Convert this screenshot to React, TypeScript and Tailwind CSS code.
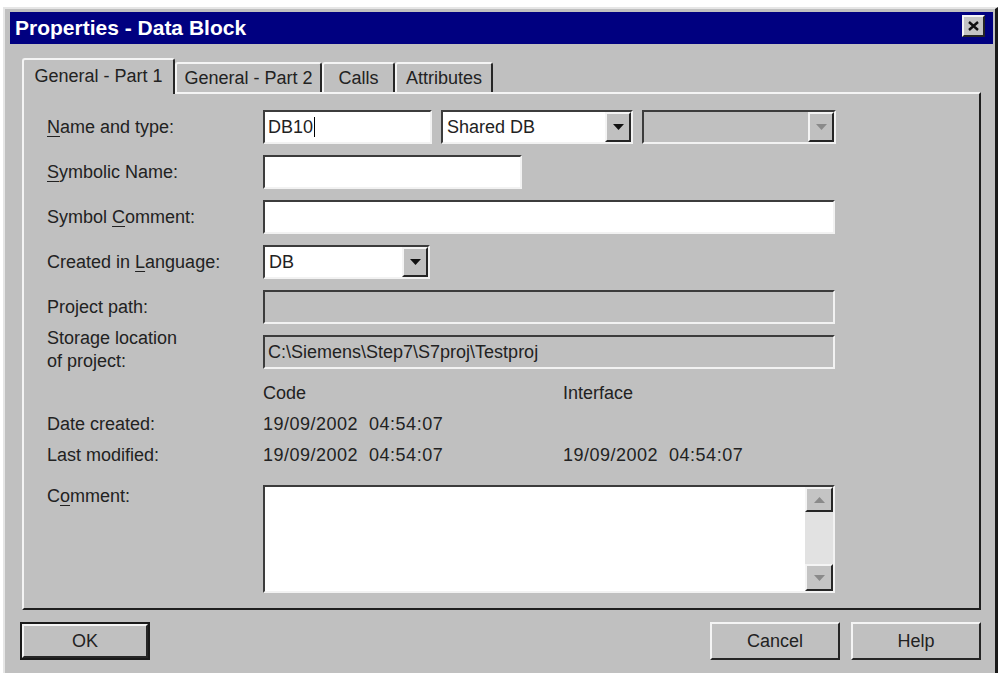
import type { ReactNode } from 'react'

const sunken = 'border-2 border-t-[#3c3c3c] border-l-[#3c3c3c] border-b-[#f2f2f2] border-r-[#f2f2f2]'
const raised = 'border-2 border-t-[#f4f4f4] border-l-[#f4f4f4] border-b-[#262626] border-r-[#262626]'

function Label({ text, u }: { text: string; u?: number }) {
  if (u === undefined) return <span>{text}</span>
  return (
    <span>
      {text.slice(0, u)}
      <span className="underline underline-offset-[3px]">{text[u]}</span>
      {text.slice(u + 1)}
    </span>
  )
}

function Arrow({ dir = 'down', disabled }: { dir?: 'down' | 'up'; disabled?: boolean }) {
  const fill = disabled ? '#8a8a8a' : '#111'
  return (
    <svg width="11" height="6" viewBox="0 0 11 6">
      {dir === 'down' ? (
        <polygon points="0,0 11,0 5.5,6" fill={fill} />
      ) : (
        <polygon points="0,6 11,6 5.5,0" fill={fill} />
      )}
    </svg>
  )
}

function Combo({ value, width, disabled }: { value?: string; width: number; disabled?: boolean }) {
  return (
    <div
      className={`${sunken} flex h-[34px] items-stretch ${disabled ? 'bg-[#c0c0c0]' : 'bg-white'}`}
      style={{ width }}
    >
      <div className="flex flex-1 items-center pl-[4px]">{value}</div>
      <div className={`${raised} flex w-[26px] items-center justify-center bg-[#c0c0c0]`}>
        <Arrow disabled={disabled} />
      </div>
    </div>
  )
}

function Field({ width, value, gray, children }: { width: number; value?: string; gray?: boolean; children?: ReactNode }) {
  return (
    <div
      className={`${sunken} flex h-[34px] items-center pl-[3px] ${gray ? 'bg-[#c0c0c0]' : 'bg-white'}`}
      style={{ width }}
    >
      {value}
      {children}
    </div>
  )
}

function Row({ label, children }: { label: ReactNode; children: ReactNode }) {
  return (
    <div className="flex h-[34px] items-center">
      <div className="w-[216px]">{label}</div>
      <div className="flex items-center gap-[9px]">{children}</div>
    </div>
  )
}

function Tab({ label, width, active }: { label: string; width: number; active?: boolean }) {
  return (
    <div
      className={`flex items-center justify-center rounded-t-[3px] border-l-2 border-t-2 border-r-2 border-l-[#f4f4f4] border-t-[#f4f4f4] border-r-[#262626] bg-[#c0c0c0] ${
        active ? 'relative z-10 -mb-[2px] h-[36px] pb-[2px]' : 'h-[30px]'
      }`}
      style={{ width }}
    >
      {label}
    </div>
  )
}

function Button({ label, isDefault }: { label: string; isDefault?: boolean }) {
  return (
    <div className={isDefault ? 'border-[2px] border-[#1a1a1a]' : ''}>
      <div
        className={`${raised} flex items-center justify-center bg-[#c0c0c0] ${
          isDefault ? 'h-[34px] w-[126px]' : 'h-[38px] w-[130px]'
        }`}
      >
        {label}
      </div>
    </div>
  )
}

export default function App() {
  return (
    <div className="h-screen w-full bg-white pl-[3px] pt-[7px] font-['Liberation_Sans',Arial,sans-serif] text-[18px] text-[#222]">
      <div className="flex h-[666px] w-[995px] flex-col border-l-2 border-t-2 border-r-[3px] border-l-[#e6e6e6] border-t-[#e6e6e6] border-r-[#1a1a1a] bg-[#c0c0c0] pl-[5px] pr-[2px] pt-[3px]">
        {/* Title bar */}
        <div className="flex h-[32px] items-start justify-between bg-[#000080] pl-[5px] pr-[8px]">
          <span className="pt-[3px] text-[21px] font-bold leading-[26px] text-white">
            Properties - Data Block
          </span>
          <div className={`${raised} mt-[3px] flex h-[22px] w-[23px] items-center justify-center bg-[#c4c4c4]`}>
            <svg width="11" height="10" viewBox="0 0 11 10">
              <path d="M1 1 L10 9 M10 1 L1 9" stroke="#111" strokeWidth="2.4" />
            </svg>
          </div>
        </div>

        <div className="px-[12px]">
          {/* Tabs */}
          <div className="mt-[14px] flex h-[34px] items-end">
            <Tab label="General - Part 1" width={153} active />
            <Tab label="General - Part 2" width={147} />
            <Tab label="Calls" width={73} />
            <Tab label="Attributes" width={98} />
          </div>

          {/* Panel */}
          <div className="h-[518px] border-2 border-t-[#f4f4f4] border-l-[#f4f4f4] border-b-[#1f1f1f] border-r-[#1f1f1f] pl-[23px] pt-[16px]">
            <div className="flex flex-col gap-[11px]">
              <Row label={<Label text="Name and type:" u={0} />}>
                <Field width={169}>
                  <span>DB10</span>
                  <span className="ml-[1px] inline-block h-[20px] w-[1px] bg-black" />
                </Field>
                <Combo value="Shared DB" width={192} />
                <Combo width={194} disabled />
              </Row>
              <Row label={<Label text="Symbolic Name:" u={0} />}>
                <Field width={259} />
              </Row>
              <Row label={<Label text="Symbol Comment:" u={7} />}>
                <Field width={572} />
              </Row>
              <Row label={<Label text="Created in Language:" u={11} />}>
                <Combo value="DB" width={167} />
              </Row>
              <Row label={<Label text="Project path:" />}>
                <Field width={572} gray />
              </Row>
              <div className="flex h-[34px] items-center">
                <div className="-mt-[4px] w-[216px] leading-[23px]">
                  Storage location
                  <br />
                  of project:
                </div>
                <Field width={572} gray value="C:\Siemens\Step7\S7proj\Testproj" />
              </div>
            </div>

            {/* Dates */}
            <div className="mt-[9px]">
              <div className="flex h-[31px] items-center">
                <div className="w-[216px]" />
                <div className="w-[300px]">Code</div>
                <div>Interface</div>
              </div>
              <div className="flex h-[31px] items-center">
                <div className="w-[216px]">Date created:</div>
                <div className="w-[300px] tracking-[0.5px]">19/09/2002&nbsp;&nbsp;04:54:07</div>
              </div>
              <div className="flex h-[31px] items-center">
                <div className="w-[216px]">Last modified:</div>
                <div className="w-[300px] tracking-[0.5px]">19/09/2002&nbsp;&nbsp;04:54:07</div>
                <div className="tracking-[0.5px]">19/09/2002&nbsp;&nbsp;04:54:07</div>
              </div>
            </div>

            {/* Comment */}
            <div className="mt-[14px] flex items-start">
              <div className="w-[216px] leading-[22px]">
                <Label text="Comment:" u={1} />
              </div>
              <div className={`${sunken} flex h-[108px] w-[572px] justify-end bg-white`}>
                <div className="flex w-[28px] flex-col bg-[#e2e2e2]">
                  <div className={`${raised} flex h-[25px] items-center justify-center bg-[#c4c4c4]`}>
                    <Arrow dir="up" disabled />
                  </div>
                  <div className="flex-1" />
                  <div className={`${raised} flex h-[27px] items-center justify-center bg-[#c4c4c4]`}>
                    <Arrow disabled />
                  </div>
                </div>
              </div>
            </div>
          </div>

          {/* Buttons */}
          <div className="mt-[12px] flex items-center justify-between">
            <div className="-ml-[2px]">
              <Button label="OK" isDefault />
            </div>
            <div className="flex gap-[11px]">
              <Button label="Cancel" />
              <Button label="Help" />
            </div>
          </div>
        </div>
      </div>
    </div>
  )
}
